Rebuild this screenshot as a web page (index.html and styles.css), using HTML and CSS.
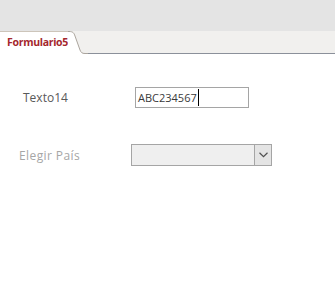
FILE: index.html
```html
<!DOCTYPE html>
<html lang="es">
<head>
  <meta charset="UTF-8">
  <title>Formulario5</title>
  <link rel="stylesheet" href="styles.css">
</head>
<body>

  <div class="top-bar"></div>

  <div class="tab-bar">
    <div class="tab">Formulario5</div>
    <svg class="tab-edge" width="20" height="23" viewBox="0 0 20 23">
      <path d="M0,0.5 H1 C5,0.5 6,2 7,5 L12,19 C13,21.5 14,22.5 17,22.5 H20 V23 H0 Z" fill="#ffffff"/>
      <path d="M0,0.5 H1 C5,0.5 6,2 7,5 L12,19 C13,21.5 14,22.5 17,22.5 H20" fill="none" stroke="#aba59d" stroke-width="1"/>
    </svg>
  </div>

  <div class="form">
    <div class="row row-text">
      <label class="label">Texto14</label>
      <div class="textbox">ABC234567<span class="caret"></span></div>
    </div>

    <div class="row row-combo">
      <label class="label label-off">Elegir País</label>
      <div class="combo">
        <div class="combo-value"></div>
        <div class="combo-btn">
          <svg width="9" height="6" viewBox="0 0 9 6">
            <path d="M0.5,0.8 L4.5,4.6 L8.5,0.8" fill="none" stroke="#505050" stroke-width="1.2"/>
          </svg>
        </div>
      </div>
    </div>
  </div>

</body>
</html>
```

FILE: styles.css
```css
body {
  margin: 0;
  background-color: #ffffff;
  font-family: "Open Sans", "Noto Sans", sans-serif;
}

.top-bar {
  height: 31px;
  background-color: #e4e4e4;
}

.tab-bar {
  display: flex;
  align-items: flex-start;
  height: 22px;
  background-color: #f1f0ee;
  border-bottom: 1px solid #8b909a;
}

.tab {
  box-sizing: border-box;
  height: 23px;
  width: 68px;
  margin-bottom: -1px;
  padding-left: 7px;
  background-color: #ffffff;
  border-top: 1px solid #cdc5ba;
  color: #a4262c;
  font-size: 10.5px;
  font-weight: bold;
  letter-spacing: -0.3px;
  line-height: 21px;
  white-space: nowrap;
}

.tab-edge {
  display: block;
  margin-bottom: -1px;
}

.form {
  padding-top: 33px;
}

.row {
  display: flex;
  align-items: center;
}

.row-text {
  padding-left: 23px;
}

.row-combo {
  margin-top: 36px;
  padding-left: 19px;
}

.label {
  font-size: 12px;
  color: #595959;
}

.row-text .label {
  width: 112px;
}

.label-off {
  width: 112px;
  color: #a6a6a6;
  letter-spacing: 0.4px;
}

.textbox {
  display: flex;
  align-items: center;
  box-sizing: border-box;
  width: 114px;
  height: 21px;
  padding-left: 2px;
  border: 1px solid #a5a5a5;
  font-size: 11px;
  color: #3a3a3a;
}

.caret {
  display: inline-block;
  width: 1px;
  height: 17px;
  margin-left: 1px;
  background-color: #000000;
}

.combo {
  display: flex;
  box-sizing: border-box;
  width: 141px;
  height: 22px;
  border: 1px solid #a5a5a5;
  background-color: #efefef;
}

.combo-value {
  flex: 1;
}

.combo-btn {
  display: flex;
  align-items: center;
  justify-content: center;
  width: 16px;
  border-left: 1px solid #a5a5a5;
  background-color: #e4e4e4;
}
```
